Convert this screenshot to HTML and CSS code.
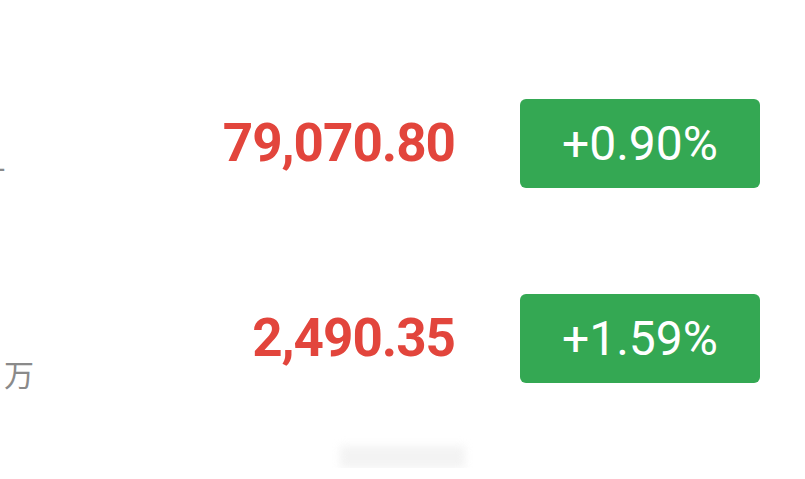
FILE: index.html
```html
<!DOCTYPE html>
<html lang="zh-CN">
<head>
<meta charset="UTF-8" />
<meta name="viewport" content="width=device-width, initial-scale=1" />
<title>行情</title>
<link rel="stylesheet" href="styles.css">
</head>
<body>

<div class="quotes">
  <div class="row">
    <div class="label"><span class="label-cut">丁</span></div>
    <div class="price">79,070.80</div>
    <div class="change">+0.90%</div>
  </div>
  <div class="row">
    <div class="label"><span>万</span></div>
    <div class="price">2,490.35</div>
    <div class="change">+1.59%</div>
  </div>
</div>
<div class="watermark"></div>

</body>
</html>
```

FILE: styles.css
```css
body {
  margin: 0;
  background-color: #fff;
  font-family: Roboto, "Noto Sans CJK SC", sans-serif;
  overflow: hidden;
}
.quotes {
  padding-top: 99px;
  padding-right: 45px;
}
.row {
  display: flex;
  align-items: center;
  height: 89px;
  margin-bottom: 106px;
}
.row:last-child {
  margin-bottom: 0;
}
.label {
  align-self: flex-start;
  width: 34px;
  margin-top: 64px;
  display: flex;
  justify-content: flex-end;
  white-space: nowrap;
  font-family: "Noto Sans CJK SC", sans-serif;
  font-size: 30px;
  line-height: 30px;
  color: #8a8a8a;
}
.label-cut {
  margin-right: 28px;
}
.price {
  flex: 1;
  text-align: right;
  font-size: 53px;
  font-weight: bold;
  letter-spacing: -1px;
  line-height: 1;
  color: #e2453c;
}
.change {
  width: 240px;
  height: 89px;
  margin-left: 65px;
  display: flex;
  align-items: center;
  justify-content: center;
  background-color: #34a853;
  border-radius: 6px;
  color: #fff;
  font-size: 48px;
  line-height: 1;
}
.watermark {
  width: 125px;
  height: 22px;
  margin: 63px 0 0 340px;
  background-color: #eeeeee;
  filter: blur(4px);
  opacity: 0.7;
}
```
